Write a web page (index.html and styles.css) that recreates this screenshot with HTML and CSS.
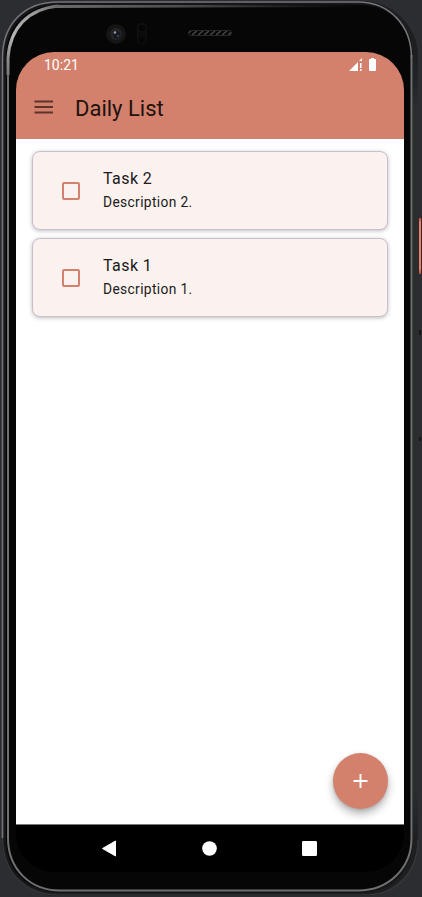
FILE: index.html
```html
<!DOCTYPE html>
<html lang="en">
<head>
<meta charset="utf-8">
<title>Daily List</title>
<link rel="stylesheet" href="styles.css">
</head>
<body>
<div class="device">
  <svg class="frame" width="422" height="897" viewBox="0 0 422 897" fill="none">
    <defs>
      <linearGradient id="topRim" gradientUnits="userSpaceOnUse" x1="56" y1="0" x2="360" y2="0">
        <stop offset="0" stop-color="#6b6b6b"/><stop offset=".4" stop-color="#4d4d4d"/><stop offset="1" stop-color="#070708"/>
      </linearGradient>
      <linearGradient id="bevel" gradientUnits="userSpaceOnUse" x1="8" y1="75" x2="60" y2="6">
        <stop offset="0" stop-color="#777"/><stop offset=".4" stop-color="#b5b5b3"/><stop offset=".75" stop-color="#9c9c9a"/><stop offset="1" stop-color="#686868"/>
      </linearGradient>
      <linearGradient id="side" x1="0" y1="0" x2="0" y2="1">
        <stop offset="0" stop-color="#292d2e" stop-opacity="0"/><stop offset=".06" stop-color="#292d2e"/><stop offset=".94" stop-color="#292d2e"/><stop offset="1" stop-color="#292d2e" stop-opacity="0"/>
      </linearGradient>
      <linearGradient id="key" x1="0" y1="0" x2="0" y2="1">
        <stop offset="0" stop-color="#b94936"/><stop offset=".08" stop-color="#ee8067"/><stop offset=".9" stop-color="#ee8067"/><stop offset="1" stop-color="#b94936"/>
      </linearGradient>
      <pattern id="mesh" width="6" height="6" patternUnits="userSpaceOnUse">
        <path d="M0 5L5 1" stroke="#464646" stroke-width="1.4"/>
      </pattern>
    </defs>
    <rect x="2" y="1" width="416" height="895" rx="56" fill="#1d1f21"/>
    <rect x="413" y="60" width="5" height="780" fill="url(#side)"/>
    <path d="M5 838V58C5 25 26 4 58 4H360C391 4 412 26 412 58V838C412 871 391 892 360 892H58C26 892 5 871 5 838Z" fill="#060607" stroke="#151619" stroke-width="2"/>
    <path d="M2.500 838V58C2.500 24 24 2 58 2H358C389 2 411.500 25 411.500 58" stroke="#77757b" stroke-width="1.500"/>
    <path d="M2.500 838C2.500 873 26 895 58 895H365C396 895 417 875 418 840" stroke="#3b3b3d"/>
    <path d="M8 70V838C8 869 30 890.500 60 890.500H358C389 890.500 411.500 868 411.500 838V55" stroke="#707070" stroke-width="2"/>
    <path d="M8 75V58C10 28 28 9 58 6" stroke="url(#bevel)" stroke-width="3"/>
    <path d="M56 5H200L360 6V7L56 8Z" fill="url(#topRim)"/>
    <circle cx="116" cy="34" r="10" fill="#151515"/>
    <circle cx="116" cy="34" r="6" fill="#242426"/>
    <circle cx="117" cy="35" r="3.500" fill="#15171f"/>
    <circle cx="115" cy="32.500" r="1.200" fill="#989da5"/>
    <circle cx="118" cy="36" r="1.300" fill="#34415d"/>
    <rect x="137.500" y="23.500" width="8.500" height="20" rx="4" fill="#0b0b0b" stroke="#121212"/>
    <circle cx="142" cy="28" r="3" fill="#050505"/><circle cx="142" cy="40" r="3" fill="#050505"/>
    <rect x="188.500" y="30.500" width="43" height="5" rx="2.500" fill="url(#mesh)" stroke="#282828"/>
    <rect x="419" y="218" width="2" height="56" fill="url(#key)"/>
    <path d="M420 330v5M420 437v4" stroke="#151617" stroke-width="2"/>
  </svg>
  <main class="screen">
    <div class="status">
      <span class="clock">10:21</span>
      <svg class="status-icons" width="28" height="14" viewBox="0 0 28 14" fill="#fff">
        <path d="M0 13L9 4V13ZM10 3L13 0V3ZM11 5h1.500v5H11ZM11 11h1.500v2H11Z"/>
        <path d="M20 1.500q0-.5.500-.5H22V0h3v1h1.500q.5 0 .5.500V12q0 1-1 1h-5q-1 0-1-1Z"/>
      </svg>
    </div>
    <header class="appbar">
      <svg class="menu" width="20" height="14" viewBox="0 0 20 14"><path d="M.5 1.500h18.500M.5 7h18.500M.5 12.500h18.500" stroke="#5b332b" stroke-width="1.900"/></svg>
      <h1 class="title">Daily List</h1>
    </header>
    <section class="list">
      <article class="task">
        <span class="checkbox"></span>
        <div class="copy"><h2 class="name">Task 2</h2><p class="description">Description 2.</p></div>
      </article>
      <article class="task">
        <span class="checkbox"></span>
        <div class="copy"><h2 class="name">Task 1</h2><p class="description">Description 1.</p></div>
      </article>
    </section>
    <button class="fab" aria-label="Add task">
      <svg width="15" height="14" viewBox="0 0 15 14"><path d="M7.500 0v14M.5 7h14" stroke="#fff" stroke-width="1.900"/></svg>
    </button>
    <nav class="navigation">
      <svg width="15" height="17" viewBox="0 0 15 17"><path d="M.5 8.500L13.500 1V16Z" fill="#fff" stroke="#fff" stroke-linejoin="round"/></svg>
      <svg width="15" height="15" viewBox="0 0 15 15"><circle cx="7.500" cy="7.500" r="7.300" fill="#fff"/></svg>
      <svg width="15" height="15" viewBox="0 0 15 15"><rect width="15" height="15" rx="1.200" fill="#fff"/></svg>
    </nav>
  </main>
</div>
</body>
</html>
```
FILE: styles.css
```css
* { box-sizing: border-box; }
body { margin: 0; background: #2b2d31; font-family: Roboto, sans-serif; }
.device { position: relative; width: 422px; height: 897px; padding: 52px 18px 25px 16px; overflow: hidden; }
.frame { position: absolute; left: 0; top: 0; }
.screen { position: relative; display: flex; flex-direction: column; width: 388px; height: 820px; border-radius: 38px; overflow: hidden; }
.status { display: flex; justify-content: space-between; height: 26px; padding: 6px 27px 0 28px; background: #d3816d; color: #fff; }
.clock { font-size: 14px; line-height: 15px; }
.status-icons { display: block; }
.appbar { display: flex; align-items: center; gap: 21px; height: 61px; padding: 0 18px; background: #d3816d; }
.menu { margin-bottom: 4px; }
.title { margin: 0; color: #21120f; font-size: 22px; font-weight: 400; line-height: 28px; }
.list { display: flex; flex: 1; flex-direction: column; gap: 8px; padding: 12px 16px 0; background: #fff; }
.task { display: flex; align-items: center; height: 79px; padding: 0 0 0 29px; border: 1px solid #c8bfce; border-radius: 8px; background: #fbf2f0; box-shadow: 0 1px 4px rgba(0, 0, 0, .26); }
.checkbox { width: 18px; height: 18px; border: 2px solid #d3816d; border-radius: 2px; }
.copy { margin: 0 0 1px 23px; color: #201a19; }
.name { margin: 0; font-size: 16px; font-weight: 400; line-height: 24px; letter-spacing: .42px; }
.description { margin: 0; font-size: 13.8px; line-height: 22px; letter-spacing: .35px; }
.fab { position: absolute; right: 16px; bottom: 63px; display: grid; place-items: center; width: 55px; height: 56px; padding: 0; border: 0; border-radius: 50%; background: #d3816d; box-shadow: 0 5px 9px rgba(0, 0, 0, .29), 0 1px 3px rgba(0, 0, 0, .12); }
.navigation { display: flex; align-items: center; justify-content: space-between; height: 48px; padding: 0 87px 0 86px; border-top: 1px solid #777; background: #000; }
```
